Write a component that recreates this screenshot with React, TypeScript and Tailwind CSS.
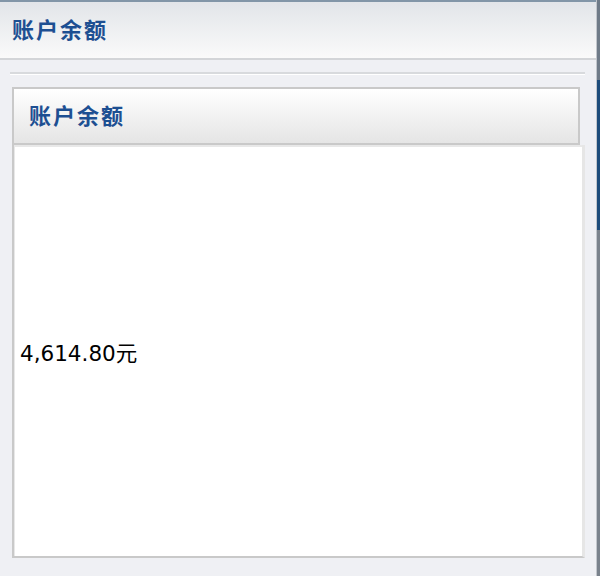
export default function App() {
  const serif = { fontFamily: '"Liberation Serif", "Noto Sans CJK SC", serif' };
  return (
    <div className="flex h-[576px] w-[600px] overflow-hidden bg-[#eff0f4]">
      <div className="flex min-w-0 flex-1 flex-col">
        {/* top bar */}
        <div className="h-[2px] bg-[#8296a8]" />
        <div className="flex h-[58px] items-center border-b-2 border-[#d3d5d8] bg-gradient-to-b from-[#e2e5e9] to-[#fafafa] pl-3">
          <h1 className="text-[22px] font-bold tracking-[2px] text-[#1d4f92]" style={serif}>
            账户余额
          </h1>
        </div>

        <div className="flex flex-1 flex-col pl-[10px] pr-[11px] pt-[12px]">
          {/* separator */}
          <div className="h-[3px] border-b border-b-white bg-[#d8dadd]" />

          <div className="mt-[12px] flex flex-1 flex-col pb-[18px] pl-[2px]">
            {/* panel header */}
            <div className="mr-[5px] flex h-[58px] items-center border-2 border-[#c9c9c9] bg-gradient-to-b from-[#ffffff] to-[#e5e5e5] pl-[15px]">
              <h2 className="text-[22px] font-bold tracking-[2px] text-[#1d4f92]" style={serif}>
                账户余额
              </h2>
            </div>
            {/* panel body */}
            <div className="flex flex-1 border-b-2 border-l-2 border-r-[3px] border-[#c9c9c9] border-r-[#e6e6e6] bg-white">
              <div className="flex flex-1 items-center border-l border-t-2 border-[#e8e8e8] pl-[5px] pt-[6px]">
                <span
                  className="text-[21.5px] text-black"
                  style={{ fontFamily: '"DejaVu Sans", "Noto Sans CJK SC", sans-serif' }}
                >
                  4,614.80元
                </span>
              </div>
            </div>
          </div>
        </div>
      </div>
      {/* window edge */}
      <div className="flex w-[4px] flex-col border-l border-[#c2c6cc]">
        <div className="h-[80px] bg-[#6f7b88]" />
        <div className="h-[150px] bg-[#1d4c7b]" />
        <div className="flex-1 bg-[#7a828c]" />
      </div>
    </div>
  );
}
